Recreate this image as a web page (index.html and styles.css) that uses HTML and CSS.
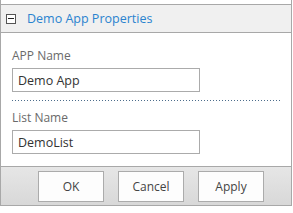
FILE: index.html
```html
<!DOCTYPE html>
<html lang="en">
<head>
  <meta charset="UTF-8" />
  <title>Demo App Properties</title>
  <link rel="stylesheet" href="styles.css">
</head>
<body>

  <div class="panel">
    <!-- section header -->
    <div class="section-head">
      <span class="toggle"></span>
      <span class="section-title">Demo App Properties</span>
    </div>

    <!-- fields -->
    <div class="section-body">
      <div class="field">
        <label class="field-label" for="appName">APP Name</label>
        <input class="field-input" id="appName" type="text" value="Demo App" />
      </div>
      <div class="divider"></div>
      <div class="field">
        <label class="field-label" for="listName">List Name</label>
        <input class="field-input" id="listName" type="text" value="DemoList" />
      </div>
    </div>

    <!-- buttons -->
    <div class="footer">
      <button class="btn">OK</button>
      <button class="btn">Cancel</button>
      <button class="btn">Apply</button>
    </div>
  </div>

</body>
</html>
```

FILE: styles.css
```css
* {
  margin: 0;
  padding: 0;
  box-sizing: border-box;
}

body {
  background: #ffffff;
  font-family: 'Open Sans', 'Noto Sans', sans-serif;
}

.panel {
  width: 292px;
  border-left: 1px solid #a8a8a8;
  border-right: 1px solid #a8a8a8;
  border-bottom: 1px solid #a8a8a8;
  padding-top: 4px;
}

.section-head {
  display: flex;
  align-items: center;
  height: 29px;
  background: #f0f0f0;
  border-top: 1px solid #a8a8a8;
  border-bottom: 1px solid #a8a8a8;
  padding-left: 5px;
}

.toggle {
  position: relative;
  width: 10px;
  height: 10px;
  border: 1px solid #555;
  background: #fff;
}

.toggle::after {
  content: '';
  position: absolute;
  left: 1px;
  right: 1px;
  top: 3px;
  height: 1px;
  background: #222;
}

.section-title {
  margin-left: 11px;
  font-size: 12.5px;
  color: #2a83cf;
  line-height: 16px;
}

.section-body {
  padding: 15px 10px 12px 11px;
}

.field-label {
  display: block;
  font-size: 12px;
  line-height: 16px;
  color: #6a6a6a;
  margin-bottom: 4px;
}

.field-input {
  display: block;
  width: 188px;
  height: 24px;
  border: 1px solid #ababab;
  padding: 0 5px;
  font-family: inherit;
  font-size: 12.5px;
  color: #333;
  outline: none;
}

.divider {
  height: 1px;
  margin: 8px 0 9px;
  background: linear-gradient(to right, #4d6d8c 1px, transparent 1px);
  background-size: 3px 1px;
}

.footer {
  display: flex;
  gap: 14px;
  height: 39px;
  padding: 4px 0 0 37px;
  border-top: 1px solid #a8a8a8;
  background: linear-gradient(#e6e6e6, #d8d8d8);
}

.btn {
  width: 66px;
  height: 31px;
  border: 1px solid #ababab;
  background: #fdfdfd;
  font-family: inherit;
  font-size: 12px;
  color: #444;
}
```
